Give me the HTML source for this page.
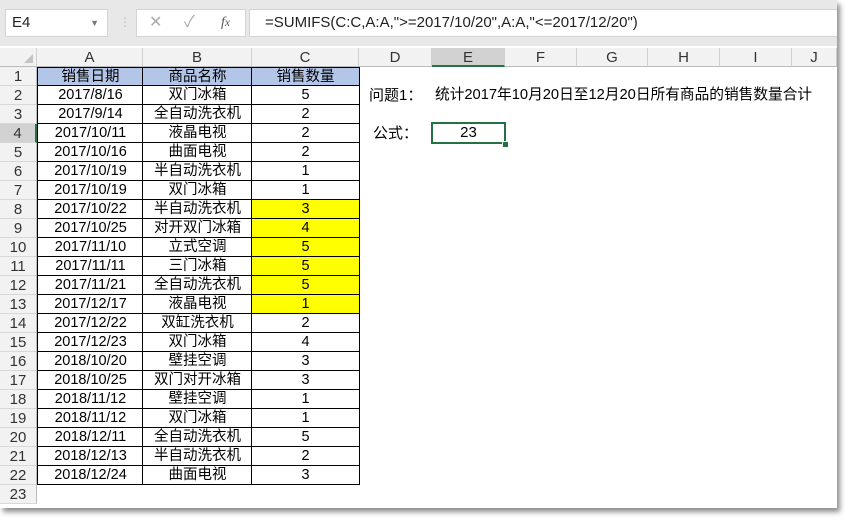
<!DOCTYPE html><html><head><meta charset="utf-8"><style>
body{margin:0;width:851px;height:522px;background:#fff;position:relative;overflow:hidden;font-family:"Liberation Sans","Noto Sans CJK SC",sans-serif;}
#win{position:absolute;left:0;top:0;width:837px;height:508px;background:#fff;box-shadow:3px 4px 5px rgba(0,0,0,.45);}
#top{position:absolute;left:0;top:0;width:837px;height:46px;background:#e8e8e8;}
.box{position:absolute;background:#fff;border:1px solid #d4d4d4;box-sizing:border-box;font-size:14px;color:#222;}
.c{position:absolute;box-sizing:border-box;font-size:14px;color:#000;text-align:center;line-height:19px;white-space:nowrap;}
</style></head><body><div id="win">
<div id="top">
<div class="box" style="left:5px;top:9px;width:103px;height:28px;line-height:26px;padding-left:6px;font-size:15px">E4<span style="position:absolute;right:8px;top:0;font-size:9px;color:#777">▼</span></div>
<div style="position:absolute;left:119px;top:15px;color:#bbb;font-size:12px">⋮</div>
<div class="box" style="left:136px;top:9px;width:110px;height:28px;line-height:26px;color:#aaa">
<span style="position:absolute;left:12px;font-size:16px">✕</span><span style="position:absolute;left:47px;font-size:16px">✓</span><span style="position:absolute;left:84px;font-style:italic;font-family:'Liberation Serif';color:#555">f<small>x</small></span></div>
<div class="box" style="left:249px;top:9px;width:588px;height:28px;line-height:26px;padding-left:15px;border-right:none;font-size:15px">=SUMIFS(C:C,A:A,"&gt;=2017/10/20",A:A,"&lt;=2017/12/20")</div>
</div>
<div id="g"></div>
</div>
<script>
var cols=[0,37,143,252,359,432,505,577,648,720,792,837],L="ABCDEFGHIJ",g=document.getElementById('g'),h='';
function cell(x,y,w,hh,t,st){h+='<div class="c" style="left:'+x+'px;top:'+y+'px;width:'+w+'px;height:'+hh+'px;'+(st||'')+'">'+t+'</div>';}
cell(0,48,37,19,'<span style="position:absolute;right:3px;bottom:3px;width:0;height:0;border-left:9px solid transparent;border-bottom:9px solid #c4c4c4"></span>','background:#f2f2f2;border-right:1px solid #d0d0d0;border-bottom:1px solid #bbb');
for(var i=0;i<10;i++){var sel=i==4;cell(cols[i+1],48,cols[i+2]-cols[i+1],19,L[i],'font-size:15px;background:'+(sel?'#d2d2d2':'#f2f2f2')+';color:#333;border-right:1px solid #d0d0d0;border-bottom:'+(sel?'2px solid #217346':'1px solid #bbb'));}
var d=[["销售日期","商品名称","销售数量"],["2017/8/16","双门冰箱","5"],["2017/9/14","全自动洗衣机","2"],["2017/10/11","液晶电视","2"],["2017/10/16","曲面电视","2"],["2017/10/19","半自动洗衣机","1"],["2017/10/19","双门冰箱","1"],["2017/10/22","半自动洗衣机","3"],["2017/10/25","对开双门冰箱","4"],["2017/11/10","立式空调","5"],["2017/11/11","三门冰箱","5"],["2017/11/21","全自动洗衣机","5"],["2017/12/17","液晶电视","1"],["2017/12/22","双缸洗衣机","2"],["2017/12/23","双门冰箱","4"],["2018/10/20","壁挂空调","3"],["2018/10/25","双门对开冰箱","3"],["2018/11/12","壁挂空调","1"],["2018/11/12","双门冰箱","1"],["2018/12/11","全自动洗衣机","5"],["2018/12/13","半自动洗衣机","2"],["2018/12/24","曲面电视","3"]];
for(var r=0;r<23;r++){var y=67+r*19;
cell(0,y,37,19,r+1,'font-size:15px;background:'+(r==3?'#d2d2d2':'#f2f2f2')+';color:#333;border-right:'+(r==3?'2px solid #217346':'1px solid #bbb')+';border-bottom:1px solid #d8d8d8');
if(r<22){for(var c=0;c<3;c++){var bg=r==0?'#b4c6e7':((c==2&&r>=7&&r<=12)?'#ffff00':'#fff');
cell(cols[c+1]-(c==0?0:1),y-(r==0?0:1),cols[c+2]-cols[c+1]+(c==0?0:1)+1,20,d[r][c],'font-size:14.5px;background:'+bg+';border:1px solid #000;line-height:19px');}}}
h+='<div class="c" style="left:369px;top:86px;text-align:left;font-size:15px">问题1：</div>';
h+='<div class="c" style="left:435px;top:86px;text-align:left;font-size:14.7px">统计2017年10月20日至12月20日所有商品的销售数量合计</div>';
h+='<div class="c" style="left:373px;top:124px;text-align:left;font-size:15px">公式：</div>';
h+='<div class="c" style="left:431px;top:122px;width:75px;height:22px;border:2px solid #217346;line-height:18px;font-size:15px">23</div><div style="position:absolute;left:502px;top:141px;width:5px;height:5px;background:#217346;border:1px solid #fff"></div>';
g.innerHTML=h;
</script></body></html>
